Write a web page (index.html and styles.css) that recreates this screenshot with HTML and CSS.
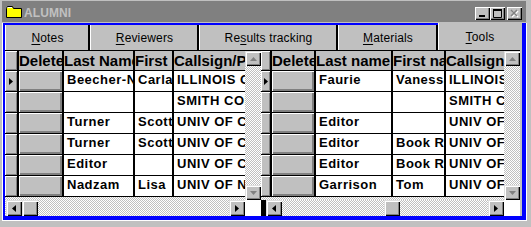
FILE: index.html
```html
<!DOCTYPE html>
<html>
<head>
<meta charset="utf-8">
<title>ALUMNI</title>
<link rel="stylesheet" href="styles.css">
</head>
<body>
<div class="window">
  <div class="titlebar">
    <svg class="folder" width="16" height="12" viewBox="0 0 16 12">
      <path d="M0.5 2.5 L1.5 0.5 H6.5 L7.5 2.5 H15.5 V11.5 H0.5 Z" fill="#ffff00" stroke="#000"/>
      <path d="M1.5 1.5 H6" stroke="#fff"/>
    </svg>
    <span class="title">ALUMNI</span>
    <div class="caption">
      <div class="cbtn"><svg width="15" height="13"><rect x="4" y="8" width="6" height="2" fill="#000"/></svg></div>
      <div class="cbtn"><svg width="15" height="13"><path d="M3.5 3.5 H11.5 V10.5 H3.5 Z" fill="none" stroke="#000"/><rect x="3" y="2" width="9" height="2" fill="#000"/></svg></div>
      <div class="cbtn gap"><svg width="15" height="13"><path d="M5 4 L11 10 M11 4 L5 10" stroke="#fff" stroke-width="1.5"/><path d="M4 3 L10 9 M10 3 L4 9" stroke="#808080" stroke-width="1.5"/></svg></div>
    </div>
  </div>
  <div class="frame">
    <div class="frame-in">
      <div class="tabs">
        <div class="tab"><span><u>N</u>otes</span></div>
        <div class="tab"><span><u>R</u>eviewers</span></div>
        <div class="tab"><span>Re<u>s</u>ults tracking</span></div>
        <div class="tab"><span><u>M</u>aterials</span></div>
        <div class="tab sel"><span><u>T</u>ools</span></div>
      </div>
      <div class="page">
        <div class="sheet l">
          <div class="sheet-top">
            <div class="body">
              <div class="tbl l">
                <div class="s"></div><div class="hd">Delete</div><div class="hd">Last Name</div><div class="hd">First Name</div><div class="hd">Callsign/Program</div>
                <div class="s"><svg width="4" height="7"><path d="M0 0 L4 3.5 L0 7 Z" fill="#000"/></svg></div><div class="b"></div><div class="c">Beecher-Nadzam</div><div class="c">Carla</div><div class="c">ILLINOIS COLLEGE</div>
                <div class="s"></div><div class="b"></div><div class="c"></div><div class="c"></div><div class="c">SMITH COLLEGE</div>
                <div class="s"></div><div class="b"></div><div class="c">Turner</div><div class="c">Scott</div><div class="c">UNIV OF CHICAGO</div>
                <div class="s"></div><div class="b"></div><div class="c">Turner</div><div class="c">Scott</div><div class="c">UNIV OF CHICAGO</div>
                <div class="s"></div><div class="b"></div><div class="c">Editor</div><div class="c"></div><div class="c">UNIV OF CHICAGO</div>
                <div class="s"></div><div class="b"></div><div class="c">Nadzam</div><div class="c">Lisa</div><div class="c">UNIV OF NOTRE DAME</div>
              </div>
            </div>
            <div class="vs">
              <div class="sb v"><svg width="7" height="4"><path d="M3.5 0 L7 4 H0 Z" fill="#808080"/></svg></div>
              <div class="sb v"><svg width="7" height="4"><path d="M0 0 H7 L3.5 4 Z" fill="#808080"/></svg></div>
            </div>
          </div>
          <div class="sheet-bot">
            <div class="hs l">
              <div class="sb"><svg width="4" height="7"><path d="M4 0 V7 L0 3.5 Z" fill="#000"/></svg></div>
              <div class="sb thumb"></div>
              <div class="sb end"><svg width="4" height="7"><path d="M0 0 V7 L4 3.5 Z" fill="#000"/></svg></div>
            </div>
            <div class="corner"></div>
          </div>
        </div>
        <div class="sheet r">
          <div class="sheet-top">
            <div class="body">
              <div class="tbl r">
                <div class="s"></div><div class="hd">Delete</div><div class="hd">Last name</div><div class="hd">First name</div><div class="hd">Callsign</div>
                <div class="s"><svg width="4" height="7"><path d="M0 0 L4 3.5 L0 7 Z" fill="#000"/></svg></div><div class="b"></div><div class="c">Faurie</div><div class="c">Vanessa</div><div class="c">ILLINOIS COLLEGE</div>
                <div class="s"></div><div class="b"></div><div class="c"></div><div class="c"></div><div class="c">SMITH COLLEGE</div>
                <div class="s"></div><div class="b"></div><div class="c">Editor</div><div class="c"></div><div class="c">UNIV OF CHICAGO</div>
                <div class="s"></div><div class="b"></div><div class="c">Editor</div><div class="c">Book Review</div><div class="c">UNIV OF CHICAGO</div>
                <div class="s"></div><div class="b"></div><div class="c">Editor</div><div class="c">Book Review</div><div class="c">UNIV OF CHICAGO</div>
                <div class="s"></div><div class="b"></div><div class="c">Garrison</div><div class="c">Tom</div><div class="c">UNIV OF CHICAGO</div>
              </div>
            </div>
            <div class="vs">
              <div class="sb v"><svg width="7" height="4"><path d="M3.5 0 L7 4 H0 Z" fill="#808080"/></svg></div>
              <div class="sb v"><svg width="7" height="4"><path d="M0 0 H7 L3.5 4 Z" fill="#808080"/></svg></div>
            </div>
          </div>
          <div class="sheet-bot">
            <div class="blk"></div>
            <div class="hs r">
              <div class="sb"><svg width="4" height="7"><path d="M4 0 V7 L0 3.5 Z" fill="#000"/></svg></div>
              <div class="sb thumb far"></div>
              <div class="sb end"><svg width="4" height="7"><path d="M0 0 V7 L4 3.5 Z" fill="#000"/></svg></div>
            </div>
            <div class="corner"></div>
          </div>
        </div>
        <div class="filler"></div>
      </div>
    </div>
  </div>
</div>
</body>
</html>
```
FILE: styles.css
```css
* { box-sizing: border-box; }
html, body { margin: 0; padding: 0; }
body {
  width: 531px;
  height: 227px;
  overflow: hidden;
  background: #c0c0c0;
  font-family: "Liberation Sans", Arial, sans-serif;
  color: #000;
}
.window {
  width: 531px;
  height: 227px;
  background: #c0c0c0;
  padding-top: 1px;
}
.titlebar {
  height: 21px;
  margin: 0 5px 0 2px;
  background: #808080;
  display: flex;
  align-items: center;
  padding-left: 4px;
}
.folder { display: block; margin-top: 1px; }
.title {
  margin-left: 2px;
  color: #c0c0c0;
  font-weight: bold;
  font-size: 12px;
  letter-spacing: 0.1px;
  padding-top: 2px;
}
.caption {
  margin-left: auto;
  display: flex;
  align-self: flex-end;
  padding-bottom: 2px;
  padding-right: 4px;
}
.cbtn {
  width: 15px;
  height: 13px;
  background: #c0c0c0;
  box-shadow: inset 1px 1px #fff, inset -1px -1px #000, inset -2px -2px #808080;
}
.cbtn svg { display: block; }
.cbtn.gap { margin-left: 2px; }

.frame {
  margin-top: 1px;
  margin-left: 2px;
  width: 525px;
  border-left: 1px solid #fff;
  border-right: 1px solid #fff;
  border-bottom: 1px solid #fff;
}
.frame-in {
  border-style: solid;
  border-color: #0000ff;
  border-width: 0 4px 4px 2px;
}
.tabs {
  display: grid;
  grid-template-columns: 85px 109px 139px 100px 84px;
  height: 27px;
}
.tab {
  border-top: 2px solid #0000ff;
  box-shadow: inset 1px 0 #fff, inset -2px 0 #000;
  display: flex;
  align-items: center;
  justify-content: center;
  font-size: 12px;
  letter-spacing: 0.15px;
  padding-top: 1px;
}
.tab.sel {
  border-top: 0;
  box-shadow: inset 1px 0 #fff;
  padding-top: 0;
}
.tab u { text-decoration-thickness: 1px; text-underline-offset: 2px; }

.page { display: flex; height: 166px; }
.sheet { display: flex; flex-direction: column; }
.sheet.l { width: 256px; }
.sheet.r { width: 259px; }
.filler { flex: 1; }
.sheet-top { display: flex; height: 150px; }
.sheet-bot { display: flex; height: 16px; }

.body, .vs, .hs {
  background: repeating-conic-gradient(#c0c0c0 0 25%, #fff 0 50%) 0 0 / 2px 2px;
}
.body { flex: 1; min-width: 0; }
.vs {
  width: 16px;
  display: flex;
  flex-direction: column;
  justify-content: space-between;
  border-top: 1px solid #000;
}
.hs { flex: 1; display: flex; }
.hs.l { padding-left: 1px; }
.corner { width: 16px; background: #fff; }
.blk { width: 5px; background: #000; }

.sb {
  width: 16px;
  height: 16px;
  flex: none;
  background: #c0c0c0;
  box-shadow: inset 1px 1px #dfdfdf, inset 2px 2px #fff, inset -1px -1px #000, inset -2px -2px #808080;
  display: flex;
  align-items: center;
  justify-content: center;
}
.sb svg { display: block; }
.sb.v { height: 15px; }
.sb.end { margin-left: auto; }
.sb.far { margin-left: 102px; }

.tbl {
  display: grid;
  column-gap: 2px;
  row-gap: 1px;
  grid-template-rows: 19px repeat(6, 20px);
  background: #000;
  border-top: 1px solid #000;
  border-bottom: 1px solid #000;
}
.tbl.l { grid-template-columns: 12px 43px 69px 37px 71px; }
.tbl.r { grid-template-columns: 9px 42px 75px 51px 58px; }

.hd {
  background: #c0c0c0;
  font-weight: bold;
  font-size: 15px;
  line-height: 19px;
  padding-left: 0;
  white-space: nowrap;
  overflow: hidden;
}
.c {
  background: #fff;
  font-weight: bold;
  font-size: 13px;
  letter-spacing: 0.5px;
  line-height: 18px;
  padding-left: 3px;
  white-space: nowrap;
  overflow: hidden;
}
.s {
  background: #c0c0c0;
  box-shadow: inset 1px 1px #fff, inset -1px -1px #808080;
  display: flex;
  align-items: center;
  justify-content: center;
}
.s svg { display: block; }
.b {
  background: #c0c0c0;
  box-shadow: inset 1px 1px #fff, inset -1px -1px #808080, inset -2px -2px #808080;
}
```
